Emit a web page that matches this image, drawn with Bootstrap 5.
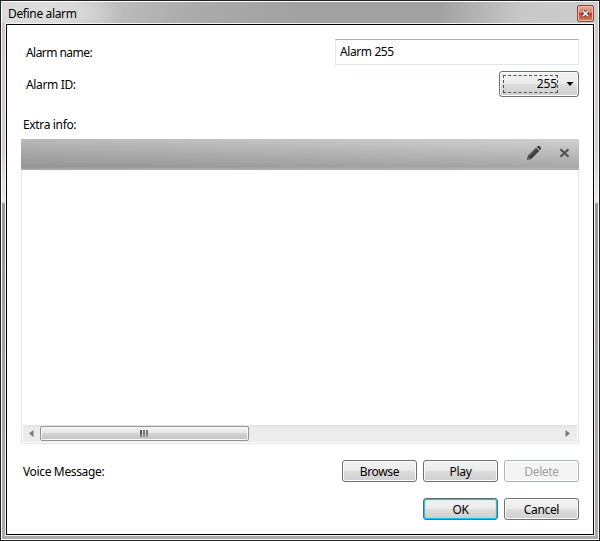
<!DOCTYPE html>
<html lang="en">
<head>
<meta charset="utf-8">
<meta name="viewport" content="width=device-width, initial-scale=1">
<title>Define alarm</title>
<link href="https://cdn.jsdelivr.net/npm/bootstrap@5.3.0/dist/css/bootstrap.min.css" rel="stylesheet">
<style>
body{font:12px/16px "Noto Sans","Open Sans",sans-serif;color:#000;letter-spacing:-.35px;overflow:hidden}
.window{width:600px;height:541px;border:1px solid #231f20;box-shadow:inset 0 0 0 1px #fff;padding:1px 5px 5px;
 background:linear-gradient(180deg,#cbc7c7 0,#d2cece 150px,#eae6e6 201px,#999 203px,#a2a2a2 340px,#ababab 100%)}
.titlebar{height:21px;margin:0 -4px 1px;padding:2px 4px 0 6px;background:radial-gradient(ellipse 86px 30px at 36px 11px,#e0e0e0 0,#dededeb0 55%,#dedede00 100%),linear-gradient(100deg,#d0d0d0 0,#c9c9c9 10%,#acacac 31%,#a1a1a1 50%,#a1a1a1 73%,#c8c8c8 87%,#cdcdcd 100%)}
.close-btn{width:17px;height:17px;padding:0;border:1px solid #7b4a43;border-radius:2px;box-shadow:inset 0 0 0 1px #f4b8a9;background:linear-gradient(#eba697,#dd806b 47%,#c33e21 50%,#d77b60)}
.client{border:1px solid #000;outline:1px solid #f4f4f4;background:#fff;padding:14px 14px 0}
.field{height:26px}
.lbl{margin-left:1px;padding-top:2px}
.field .lbl{letter-spacing:-.55px}
.id-row{height:26px;margin-top:6px}
.name-input{width:244px;height:26px;padding:0 4px 2px;border:1px solid #e2e6ee;border-top-color:#abadb3;border-radius:1px;font-size:12px;letter-spacing:-.4px;color:#000}
.aero{width:75px;height:22px;padding:1px 0 0;border:1px solid #707070;border-radius:3px;box-shadow:inset 0 0 0 1px #fcfcfc;background:linear-gradient(#f2f2f2,#ebebeb 49%,#ddd 50%,#cfcfcf);font-size:12px;line-height:19px;letter-spacing:-.35px;color:#000}
.aero:disabled{border-color:#adb2b5;background:#f4f4f4;color:#a0a0a0}
.aero-default{border-color:#596b74;box-shadow:inset 0 0 0 1px #10c8fa,inset 0 0 1px 1px #10c8fa}
.picker{width:80px;height:26px;padding:0 4px 0 3px}
.picker-value{width:55px;height:18px;border:1px dashed #555;line-height:15px;letter-spacing:-.1px}
.extra{height:16px;margin:20px 0 6px 2px}
.toolbar{height:31px;padding:0 7px 2px 0;border-bottom:1px solid #aeaaae;background:linear-gradient(180deg,#0000 0,#00000033 28px,#00000022 29px),linear-gradient(90deg,#b9b9b9,#d1d1d1)}
.notes{border:1px solid #e3e6ef;border-top:0;height:274px;padding:0 1px 1px}
.scroll{height:17px;padding:0 7px 0 6px;background:linear-gradient(#e3e3e3,#ececec 4px,#ececec)}
.thumb{width:209px;height:15px;margin-left:6px;border:1px solid #959595;border-radius:2px;box-shadow:inset 0 0 0 1px #fafafa;background:linear-gradient(#f3f3f3,#e6e6e8 48%,#d3d3d6 50%,#c2c2c6)}
.voice{gap:6px;height:22px;margin-top:16px}
.voice-label{margin-left:2px;padding-top:1px}
.actions{gap:6px;margin-top:16px}
svg{display:block}
</style>
</head>
<body>
<div class="window d-flex flex-column">
 <header class="titlebar d-flex justify-content-between align-items-center flex-shrink-0">
  <span>Define alarm</span>
  <button class="close-btn d-flex align-items-center justify-content-center" aria-label="Close"><svg width="9" height="9" viewBox="0 0 9 9"><path d="M2 2l5 5M7 2l-5 5" stroke="#535666" stroke-width="3.4"/><path d="M2 2l5 5M7 2l-5 5" stroke="#fff" stroke-width="1.5"/></svg></button>
 </header>
 <main class="client flex-grow-1">
  <div class="d-flex justify-content-between align-items-center field"><label for="alarmName" class="ps-1 lbl">Alarm name:</label><input id="alarmName" class="name-input" value="Alarm 255"></div>
  <div class="d-flex justify-content-between align-items-center id-row"><span class="ps-1 lbl">Alarm ID:</span>
   <button class="aero picker d-flex align-items-center justify-content-between"><span class="picker-value text-end">255</span><svg width="8" height="5"><path d="M.5 0h7L4 4z"/></svg></button></div>
  <div class="extra">Extra info:</div>
  <div class="toolbar d-flex align-items-center justify-content-end">
   <svg width="16" height="16" viewBox="0 0 16 16" class="me-3"><path d="M.8 15l1.2-4.2 8-8 3.2 3.2-8 8z" fill="#3b3b3b"/><path d="M10.8 2l1.2-1q.8-.6 1.6.2l1.2 1.2q.8.8 0 1.6L14 5.2z" fill="#3b3b3b"/><path d="M3.2 11.2l7-7" stroke="#777" stroke-width=".8"/><path d="M2 11.5l2.5 2.5L.8 15z" fill="#686868"/></svg>
   <svg width="14" height="14" viewBox="0 0 14 14"><path d="M2.5 3.2l8 7.6M10.5 3.2l-8 7.6" stroke="#505050" stroke-width="2.1"/></svg>
  </div>
  <div class="notes d-flex flex-column justify-content-end">
   <div class="scroll d-flex align-items-center">
    <svg width="5" height="7"><path d="M4.5 0v7L0 3.5z" fill="#777"/></svg>
    <div class="thumb d-flex align-items-center justify-content-center"><svg width="9" height="7"><path d="M1 0v7" stroke="#333" stroke-width="1.6"/><path d="M4 0v7M7 0v7" stroke="#5a5a5a" stroke-width="1.6"/><path d="M0 7L9 7V4H0z" fill="#c8c8cb" opacity=".35"/></svg></div>
    <svg width="5" height="7" class="ms-auto"><path d="M.5 0v7L5 3.5z" fill="#777"/></svg>
   </div>
  </div>
  <div class="d-flex align-items-center voice"><span class="me-auto voice-label">Voice Message:</span><button class="aero">Browse</button><button class="aero">Play</button><button class="aero" disabled>Delete</button></div>
  <div class="d-flex justify-content-end actions"><button class="aero aero-default">OK</button><button class="aero">Cancel</button></div>
 </main>
</div>
<script src="https://cdn.jsdelivr.net/npm/bootstrap@5.3.0/dist/js/bootstrap.bundle.min.js"></script>
</body>
</html>
